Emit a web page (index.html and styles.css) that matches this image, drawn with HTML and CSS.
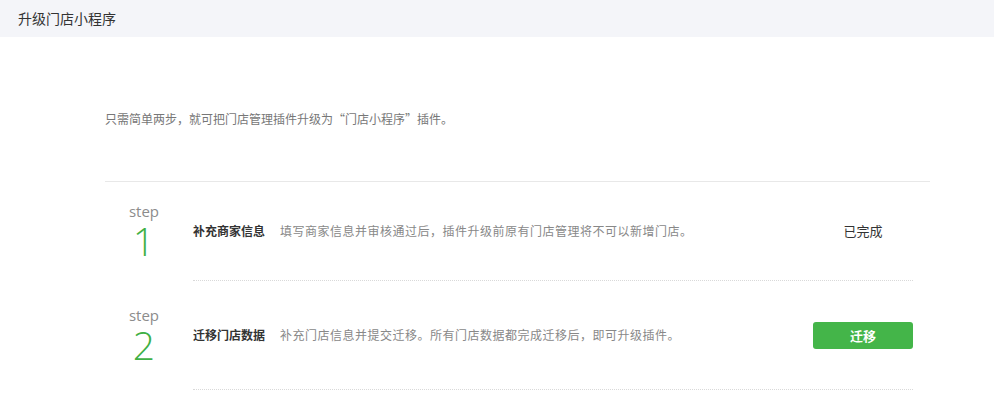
FILE: index.html
```html
<!DOCTYPE html>
<html lang="zh-CN">
<head>
    <meta charset="UTF-8">
    <title>升级门店小程序</title>
    <link rel="stylesheet" href="styles.css">
</head>
<body>
    <!-- 页头 -->
    <div class="page-header">升级门店小程序</div>

    <div class="upgrade">
        <p class="upgrade-tip">只需简单两步，就可把门店管理插件升级为“门店小程序”插件。</p>

        <div class="step-list">
            <!-- 第一步 -->
            <div class="step-row">
                <div class="step-no">
                    <span class="step-no-label">step</span>
                    <span class="step-no-num">1</span>
                </div>
                <div class="step-body">
                    <span class="step-title">补充商家信息</span>
                    <span class="step-desc">填写商家信息并审核通过后，插件升级前原有门店管理将不可以新增门店。</span>
                    <div class="step-action">
                        <span class="step-done">已完成</span>
                    </div>
                </div>
            </div>

            <!-- 第二步 -->
            <div class="step-row step-row-tall">
                <div class="step-no">
                    <span class="step-no-label">step</span>
                    <span class="step-no-num">2</span>
                </div>
                <div class="step-body">
                    <span class="step-title">迁移门店数据</span>
                    <span class="step-desc">补充门店信息并提交迁移。所有门店数据都完成迁移后，即可升级插件。</span>
                    <div class="step-action">
                        <a class="btn-green" href="javascript:;">迁移</a>
                    </div>
                </div>
            </div>
        </div>
    </div>
</body>
</html>
```

FILE: styles.css
```css
body {
    margin: 0;
    background: #fff;
    font-family: "Noto Sans CJK SC", "Liberation Sans", sans-serif;
    color: #333;
}

/* 页头 */
.page-header {
    height: 37px;
    line-height: 37px;
    padding: 0 18px;
    font-size: 14px;
    color: #333;
    background-color: #f4f5f9;
}

.upgrade {
    padding: 72px 64px 0 105px;
}

.upgrade-tip {
    margin: 0 0 52px;
    font-size: 12px;
    line-height: 20px;
    color: #777;
}

/* 步骤列表 */
.step-list {
    border-top: 1px solid #e8e8e8;
}

.step-row {
    display: flex;
    padding-right: 17px;
}

.step-no {
    width: 78px;
    margin-right: 10px;
    align-self: center;
    text-align: center;
}

.step-no-label {
    display: block;
    font-family: "Open Sans", sans-serif;
    font-size: 15px;
    line-height: 18px;
    color: #8c8c8c;
}

.step-no-num {
    display: block;
    font-family: "Open Sans", sans-serif;
    font-weight: 300;
    font-size: 39px;
    line-height: 42px;
    color: #3fb045;
}

.step-body {
    flex: 1;
    display: flex;
    align-items: center;
    height: 98px;
    border-bottom: 1px dotted #d9d9d9;
    font-size: 12px;
    line-height: 20px;
}

.step-row-tall .step-body {
    height: 108px;
}

.step-title {
    margin-right: 15px;
    color: #333;
    font-weight: bold;
}

.step-desc {
    flex: 1;
    color: #888;
    letter-spacing: 0.5px;
}

.step-action {
    width: 100px;
    text-align: center;
}

.step-done {
    font-size: 13px;
    color: #333;
}

.btn-green {
    display: block;
    height: 27px;
    line-height: 27px;
    border-radius: 3px;
    background-color: #44b549;
    color: #fff;
    font-size: 13px;
    font-weight: bold;
    text-decoration: none;
}
```
